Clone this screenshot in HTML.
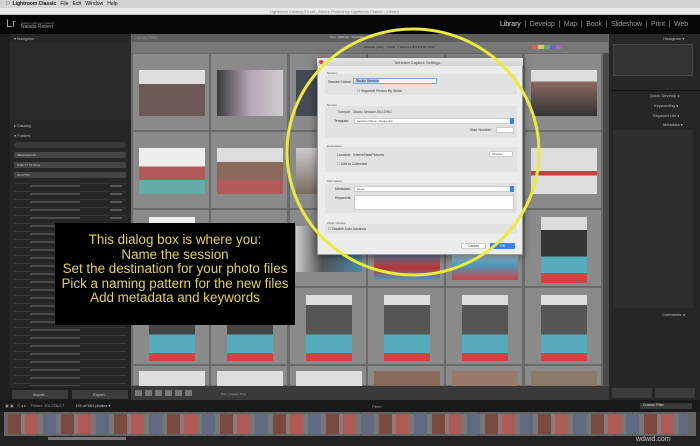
<!DOCTYPE html>
<html><head><meta charset="utf-8"><style>
*{margin:0;padding:0;box-sizing:border-box}
body{width:700px;height:446px;overflow:hidden;background:#111;font-family:"Liberation Sans",sans-serif;position:relative}
.a{position:absolute}
.t{position:absolute;font-size:4px;color:#ccc;white-space:nowrap}
.cell{position:absolute;width:78px;height:78px;background:#8a8a8a;border:1px solid #6a6a6a}
.cell .ph{position:absolute}
.L{left:6px;top:16px;width:66px;height:46px}
.P{left:16px;top:7px;width:46px;height:66px}
</style></head><body>
<div class="a" style="left:0;top:0;width:700px;height:8px;background:#d4d4d4"></div>
<div class="t" style="left:6px;top:1px;color:#111;font-size:5px"><b>&#63743;&nbsp; Lightroom Classic</b>&nbsp;&nbsp; File&nbsp;&nbsp; Edit&nbsp;&nbsp; Window&nbsp;&nbsp; Help</div>
<div class="a" style="left:0;top:8px;width:700px;height:7px;background:#e8e8e8;border-bottom:1px solid #bbb"></div>
<div class="t" style="left:270px;top:9px;color:#777;font-size:4px">Lightroom Catalog-2.lrcat - Adobe Photoshop Lightroom Classic - Library</div>
<div class="a" style="left:0;top:15px;width:700px;height:19px;background:#060606"></div>
<div class="t" style="left:6px;top:18px;font-size:11px;color:#aaa">Lr</div>
<div class="t" style="left:21px;top:21px;font-size:3px;color:#888">Adobe Lightroom Classic</div>
<div class="t" style="left:21px;top:24px;font-size:5px;color:#aaa">Natalia Robert</div>
<div class="t" style="left:500px;top:21px;font-size:7px;color:#999;letter-spacing:-0.1px"><span style="color:#ddd">Library</span> &nbsp;|&nbsp; Develop &nbsp;|&nbsp; Map &nbsp;|&nbsp; Book &nbsp;|&nbsp; Slideshow &nbsp;|&nbsp; Print &nbsp;|&nbsp; Web</div>
<div class="a" style="left:0;top:34px;width:131px;height:366px;background:#1e1e1e"></div>
<div class="a" style="left:10px;top:34px;width:121px;height:366px;background:#262626"></div>
<div class="t" style="left:14px;top:36px;color:#bbb">▾ Navigator</div>
<div class="a" style="left:10px;top:42px;width:121px;height:78px;background:#2a2a2a"></div>
<div class="t" style="left:14px;top:123px;color:#bbb">▸ Catalog</div>
<div class="t" style="left:14px;top:133px;color:#bbb">▾ Folders</div>
<div class="a" style="left:14px;top:142px;width:112px;height:6px;background:#3a3a3a;border-radius:3px"></div>
<div class="a" style="left:14px;top:152px;width:112px;height:6px;background:#444;border-radius:2px"></div>
<div class="t" style="left:17px;top:153px;font-size:3px">Macintosh HD</div>
<div class="a" style="left:14px;top:162px;width:112px;height:6px;background:#444"></div>
<div class="t" style="left:17px;top:163px;font-size:3px">5 Wk 17 Tb Drive</div>
<div class="a" style="left:14px;top:172px;width:112px;height:6px;background:#444"></div>
<div class="t" style="left:17px;top:173px;font-size:3px">06-17 KB</div>
<div class="a" style="left:14px;top:180px;width:112px;height:208px;background:repeating-linear-gradient(#262626 0 3px,#3a3a3a 3px 4px,#262626 4px 8px)"></div>
<div class="a" style="left:30px;top:182px;width:50px;height:204px;background:repeating-linear-gradient(#262626 0 3px,#666 3px 5px,#262626 5px 8px);opacity:.6"></div>
<div class="a" style="left:110px;top:182px;width:12px;height:140px;background:repeating-linear-gradient(#262626 0 3px,#777 3px 5px,#262626 5px 8px);opacity:.6"></div>
<div class="a" style="left:10px;top:388px;width:121px;height:12px;background:#1e1e1e"></div>
<div class="a" style="left:12px;top:390px;width:56px;height:9px;background:#3c3c3c"></div>
<div class="a" style="left:72px;top:390px;width:56px;height:9px;background:#3c3c3c"></div>
<div class="t" style="left:33px;top:392px">Import...</div>
<div class="t" style="left:93px;top:392px">Export...</div>
<div class="a" style="left:131px;top:34px;width:478px;height:366px;background:#6a6a6a"></div>
<div class="a" style="left:132px;top:34px;width:476px;height:8px;background:#5d5d5d"></div>
<div class="t" style="left:135px;top:35px;font-size:4px;color:#999">Library Filter:</div>
<div class="t" style="left:330px;top:35px;font-size:3px;color:#ddd">Text &nbsp; Attribute &nbsp; Metadata &nbsp; None</div>
<div class="a" style="left:132px;top:42px;width:476px;height:11px;background:#777"></div>
<div class="t" style="left:364px;top:45px;font-size:3px;color:#222">Attribute | Flag &nbsp;&nbsp; | Edits &nbsp;&nbsp; | Rating ≥ ★★★★★ | Color</div>
<div class="a" style="left:532px;top:45px;width:30px;height:4px;background:linear-gradient(90deg,#c66 0 20%,#cc6 20% 40%,#6a6 40% 60%,#66c 60% 80%,#a6a 80%)"></div>
<div class="cell" style="left:132px;top:53px"><div class="ph L" style="background:linear-gradient(#ddd 0 30%,#6b5a58 30% 100%)"></div></div>
<div class="cell" style="left:210px;top:53px"><div class="ph L" style="background:linear-gradient(90deg,#3a3a3a,#b7a6b8 50%,#ccc)"></div></div>
<div class="cell" style="left:289px;top:53px"><div class="ph L" style="background:#454a55"></div></div>
<div class="cell" style="left:367px;top:53px"></div>
<div class="cell" style="left:445px;top:53px"></div>
<div class="cell" style="left:524px;top:53px"><div class="ph L" style="background:linear-gradient(#ddd 0 25%,#8a6a60 25%,#333 100%)"></div></div>
<div class="cell" style="left:132px;top:131px"><div class="ph L" style="background:linear-gradient(#eee 0 40%,#b05a5a 40% 70%,#6aa 70%)"></div></div>
<div class="cell" style="left:210px;top:131px"><div class="ph L" style="background:linear-gradient(#ddd 0 30%,#8a6a5a 30% 70%,#b05a5a 70%)"></div></div>
<div class="cell" style="left:289px;top:131px"><div class="ph L" style="background:linear-gradient(#ccc,#7a6a60)"></div></div>
<div class="cell" style="left:367px;top:131px"></div>
<div class="cell" style="left:445px;top:131px"></div>
<div class="cell" style="left:524px;top:131px"><div class="ph L" style="background:linear-gradient(#ddd 0 50%,#b44 50% 60%,#ddd 60%)"></div></div>
<div class="cell" style="left:132px;top:209px"><div class="ph P" style="background:linear-gradient(#eee 0 30%,#556 30%)"></div></div>
<div class="cell" style="left:210px;top:209px"></div>
<div class="cell" style="left:289px;top:209px"><div class="ph L" style="background:linear-gradient(90deg,#ccc,#555 40%,#4a8ab0)"></div></div>
<div class="cell" style="left:367px;top:209px"><div class="ph L" style="top:40px;height:30px;background:linear-gradient(#4a9ac0,#b33 60%,#4a9ac0)"></div></div>
<div class="cell" style="left:445px;top:209px"><div class="ph L" style="top:40px;height:30px;background:linear-gradient(#ddd,#4a9ac0 50%,#c44)"></div></div>
<div class="cell" style="left:524px;top:209px"><div class="ph P" style="background:linear-gradient(#ddd 0 20%,#333 20% 60%,#5ab 60% 85%,#c44 85%)"></div></div>
<div class="cell" style="left:132px;top:287px"><div class="ph P" style="background:linear-gradient(#ddd 0 15%,#444 15% 60%,#5ab 60% 88%,#c44 88%)"></div></div>
<div class="cell" style="left:210px;top:287px"><div class="ph P" style="background:linear-gradient(#ddd 0 15%,#444 15% 60%,#5ab 60% 88%,#c44 88%)"></div></div>
<div class="cell" style="left:289px;top:287px"><div class="ph P" style="background:linear-gradient(#ddd 0 15%,#555 15% 60%,#5ab 60% 88%,#c44 88%)"></div></div>
<div class="cell" style="left:367px;top:287px"><div class="ph P" style="background:linear-gradient(#ddd 0 15%,#555 15% 60%,#5ab 60% 88%,#c44 88%)"></div></div>
<div class="cell" style="left:445px;top:287px"><div class="ph P" style="background:linear-gradient(#ddd 0 15%,#555 15% 60%,#5ab 60% 88%,#c44 88%)"></div></div>
<div class="cell" style="left:524px;top:287px"><div class="ph P" style="background:linear-gradient(#ddd 0 15%,#555 15% 60%,#5ab 60% 88%,#c44 88%)"></div></div>
<div class="cell" style="left:132px;top:365px;height:21px"><div class="ph L" style="top:5px;height:16px;background:#ddd"></div></div>
<div class="cell" style="left:210px;top:365px;height:21px"><div class="ph L" style="top:5px;height:16px;background:#ddd"></div></div>
<div class="cell" style="left:289px;top:365px;height:21px"><div class="ph L" style="top:5px;height:16px;background:#ddd"></div></div>
<div class="cell" style="left:367px;top:365px;height:21px"><div class="ph L" style="top:5px;height:16px;background:#8a6a5a"></div></div>
<div class="cell" style="left:445px;top:365px;height:21px"><div class="ph L" style="top:5px;height:16px;background:#9a7a6a"></div></div>
<div class="cell" style="left:524px;top:365px;height:21px"><div class="ph L" style="top:5px;height:16px;background:#8a7a6a"></div></div>
<div class="a" style="left:603px;top:53px;width:6px;height:333px;background:#4a4a4a"></div>
<div class="a" style="left:131px;top:386px;width:478px;height:14px;background:#3a3a3a"></div>
<div class="a" style="left:135px;top:390px;width:60px;height:6px;background:repeating-linear-gradient(90deg,#777 0 7px,#3a3a3a 7px 10px)"></div>
<div class="t" style="left:221px;top:392px;font-size:3px;color:#aaa">Sort: Capture Time</div>
<div class="a" style="left:609px;top:34px;width:91px;height:366px;background:#262626"></div>
<div class="t" style="left:663px;top:36px;color:#bbb">Histogram ▾</div>
<div class="a" style="left:613px;top:44px;width:80px;height:32px;background:#333;border:1px solid #444"></div>
<div class="a" style="left:612px;top:90px;width:88px;height:1px;background:#111"></div>
<div class="t" style="left:650px;top:93px;color:#bbb">Quick Develop ◂</div>
<div class="t" style="left:654px;top:103px;color:#bbb">Keywording ◂</div>
<div class="t" style="left:653px;top:113px;color:#bbb">Keyword List ◂</div>
<div class="t" style="left:663px;top:122px;color:#bbb">Metadata ▾</div>
<div class="a" style="left:613px;top:130px;width:80px;height:178px;background:#2e2e2e"></div>
<div class="t" style="left:662px;top:312px;color:#bbb">Comments ◂</div>
<div class="a" style="left:612px;top:388px;width:40px;height:10px;background:#3c3c3c"></div>
<div class="a" style="left:655px;top:388px;width:40px;height:10px;background:#3c3c3c"></div>
<div class="a" style="left:0;top:400px;width:700px;height:12px;background:#1a1a1a"></div>
<div class="t" style="left:5px;top:403px;color:#999">▣ ▣ &nbsp; ⠿ ◂ ▸ &nbsp;&nbsp; Folder: 2017/06/17 &nbsp;&nbsp;&nbsp;&nbsp;&nbsp;&nbsp;&nbsp;&nbsp; <span style="color:#ccc">191 of 561 photos ▾</span></div>
<div class="t" style="left:372px;top:404px;font-size:4px;color:#999">Filter:</div>
<div class="a" style="left:640px;top:403px;width:52px;height:6px;background:#3a3a3a"></div>
<div class="t" style="left:643px;top:403px;font-size:3.5px;color:#ddd">Custom Filter</div>
<div class="a" style="left:0;top:412px;width:700px;height:34px;background:#222"></div>
<div class="a" style="left:4px;top:412px;width:692px;height:24px;background:repeating-linear-gradient(90deg,#666 0 16px,#555 16px 17px)"></div>
<div class="a" style="left:8px;top:414px;width:680px;height:20px;background:repeating-linear-gradient(90deg,#7a4a40 0 13px,#8a7a7a 13px 17px,#b05a55 17px 30px,#777 30px 35px,#606a80 35px 48px,#777 48px 53px)"></div>
<div class="a" style="left:48px;top:437px;width:78px;height:3px;background:#777"></div>
<div class="t" style="left:636px;top:436px;font-size:7px;color:#ccc">wdwid.com</div>
<div class="a" style="left:55px;top:223px;width:240px;height:102px;background:#000"></div>
<div class="a" style="left:50px;top:233px;width:250px;text-align:center;color:#e3d64a;font-size:13.4px;line-height:14.5px">This dialog box is where you:<br>Name the session<br>Set the destination for your photo files<br>Pick a naming pattern for the new files<br>Add metadata and keywords</div>
<div class="a" style="left:317px;top:58px;width:206px;height:197px;background:#ececec;border:1px solid #999;box-shadow:0 2px 8px rgba(0,0,0,.5)"></div>
<div class="a" style="left:317px;top:58px;width:206px;height:8px;background:linear-gradient(#e6e6e6,#d2d2d2)"></div>
<div class="a" style="left:319px;top:60px;width:4px;height:4px;border-radius:50%;background:#e0443e"></div>
<div class="t" style="left:394px;top:60px;color:#444;font-size:4px">Tethered Capture Settings</div>
<div class="t" style="left:327px;top:71px;font-size:3px;color:#555">Session</div>
<div class="a" style="left:325px;top:74px;width:192px;height:21px;background:#e2e2e2"></div>
<div class="t" style="left:328px;top:80px;font-size:3.5px;color:#333">Session Name:</div>
<div class="a" style="left:353px;top:78px;width:84px;height:6px;background:#fff;border:1px solid #7aa7e0"></div>
<div class="a" style="left:355px;top:79px;width:24px;height:4px;background:#b3d2f8"></div>
<div class="t" style="left:356px;top:79px;font-size:3.5px;color:#222">Studio Session</div>
<div class="t" style="left:357px;top:89px;font-size:3.5px;color:#333">☐ Segment Photos By Shots</div>
<div class="t" style="left:327px;top:103px;font-size:3px;color:#555">Naming</div>
<div class="a" style="left:325px;top:106px;width:192px;height:32px;background:#e2e2e2"></div>
<div class="t" style="left:338px;top:110px;font-size:3.5px;color:#444">Sample: &nbsp;Studio Session-001.DNG</div>
<div class="t" style="left:334px;top:119px;font-size:3.5px;color:#333">Template:</div>
<div class="a" style="left:354px;top:118px;width:160px;height:6px;background:#fff;border:1px solid #ccc"></div>
<div class="a" style="left:510px;top:118px;width:4px;height:6px;background:#3b82e8"></div>
<div class="t" style="left:357px;top:119px;font-size:3px;color:#444">Session Name - Sequence</div>
<div class="t" style="left:470px;top:128px;font-size:3.5px;color:#333">Start Number:</div>
<div class="a" style="left:496px;top:127px;width:18px;height:6px;background:#fff;border:1px solid #ccc"></div>
<div class="t" style="left:327px;top:144px;font-size:3px;color:#555">Destination</div>
<div class="a" style="left:325px;top:147px;width:192px;height:25px;background:#e2e2e2"></div>
<div class="t" style="left:337px;top:153px;font-size:3.5px;color:#333">Location: &nbsp;/Users/NatsPictures</div>
<div class="a" style="left:489px;top:151px;width:24px;height:6px;background:#fff;border:1px solid #ccc;border-radius:1px"></div>
<div class="t" style="left:492px;top:152px;font-size:3px;color:#333">Choose...</div>
<div class="t" style="left:337px;top:162px;font-size:3.5px;color:#333">☐ Add to Collection</div>
<div class="t" style="left:327px;top:179px;font-size:3px;color:#555">Information</div>
<div class="a" style="left:325px;top:183px;width:192px;height:30px;background:#e2e2e2"></div>
<div class="t" style="left:335px;top:187px;font-size:3.5px;color:#333">Metadata:</div>
<div class="a" style="left:354px;top:186px;width:160px;height:6px;background:#fff;border:1px solid #ccc"></div>
<div class="a" style="left:510px;top:186px;width:4px;height:6px;background:#3b82e8"></div>
<div class="t" style="left:357px;top:187px;font-size:3px;color:#444">None</div>
<div class="t" style="left:335px;top:196px;font-size:3.5px;color:#333">Keywords:</div>
<div class="a" style="left:354px;top:195px;width:160px;height:15px;background:#fff;border:1px solid #ccc"></div>
<div class="t" style="left:327px;top:221px;font-size:3px;color:#555">Other Options</div>
<div class="a" style="left:325px;top:224px;width:192px;height:10px;background:#e2e2e2"></div>
<div class="t" style="left:328px;top:227px;font-size:3.5px;color:#333">☐ Disable Auto Advance</div>
<div class="a" style="left:461px;top:243px;width:25px;height:6px;background:#fff;border:1px solid #ccc;border-radius:1px"></div>
<div class="t" style="left:468px;top:244px;font-size:3.5px;color:#333">Cancel</div>
<div class="a" style="left:490px;top:243px;width:25px;height:6px;background:#3b82e8;border-radius:1px"></div>
<div class="t" style="left:500px;top:244px;font-size:3.5px;color:#fff">OK</div>
<svg class="a" style="left:0;top:0" width="700" height="446"><ellipse cx="413" cy="152" rx="126" ry="123" fill="none" stroke="#e8ec3a" stroke-width="3"/></svg>
</body></html>
